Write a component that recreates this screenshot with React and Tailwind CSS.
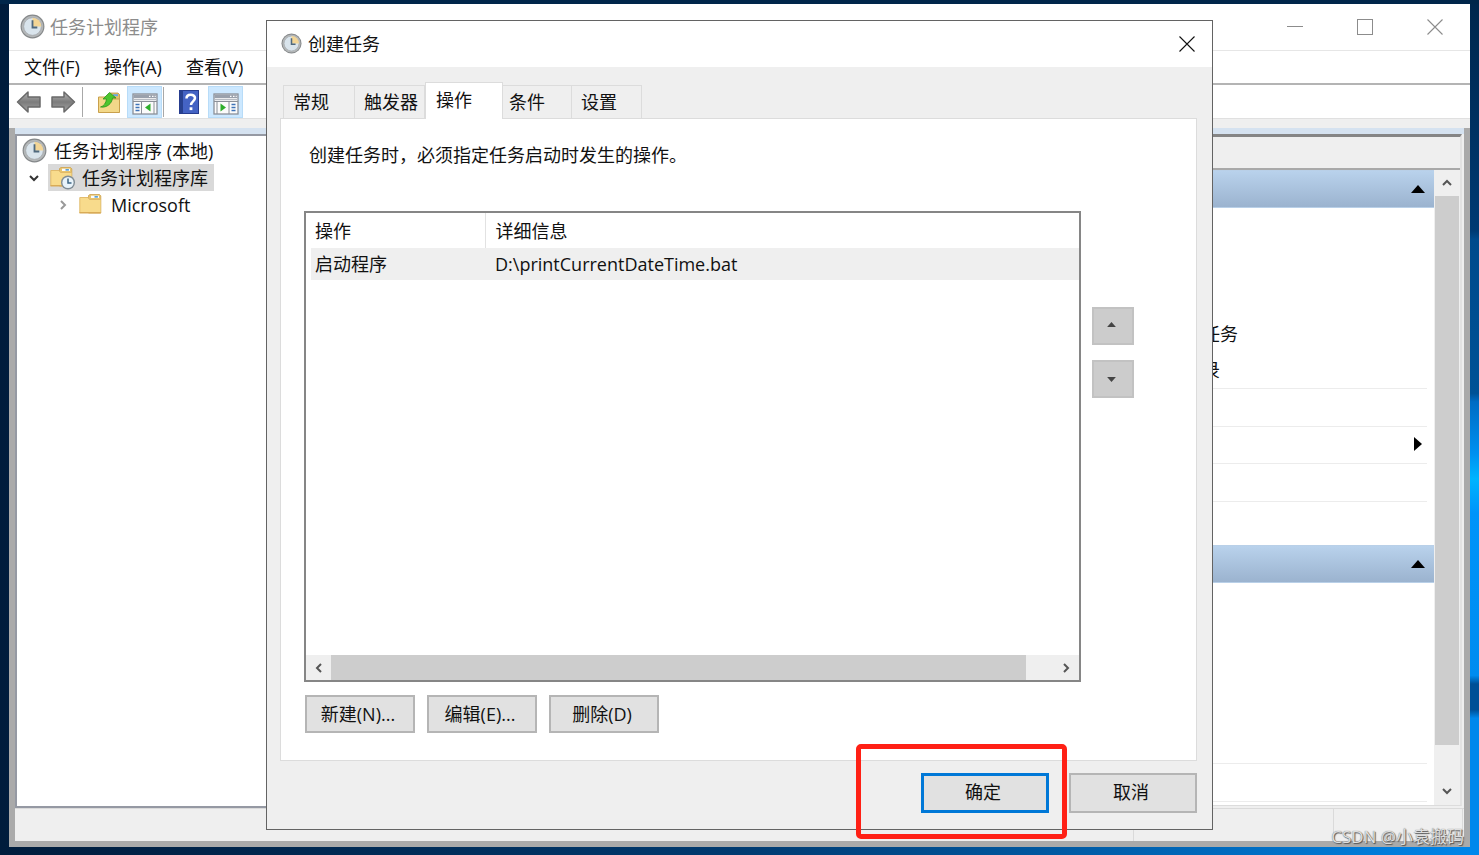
import React from "react";

function ClockIcon({ className }) {
  return (
    <svg viewBox="0 0 26 26" className={className} aria-hidden="true">
      <circle cx="13" cy="13" r="12.4" fill="#85888a" />
      <circle cx="13" cy="13" r="11.2" fill="#b4b7b8" />
      <circle cx="13" cy="13" r="9.2" fill="#d9e4ec" stroke="#a3a8ab" strokeWidth="0.8" />
      <path d="M13 13V3.800A9.200 9.200 0 0 1 22.200 13Z" fill="#f3d595" />
      <path d="M13 6.500V14H18" fill="none" stroke="#4f687d" strokeWidth="1.900" />
    </svg>
  );
}

function FolderIcon({ clock = false, className }) {
  return (
    <svg viewBox="0 0 26 24" className={className} aria-hidden="true">
      <path d="M9.500 6V2.500L11 1.500H20.500L21.800 2.800V20H9.500Z" fill="#e8c46d" stroke="#cda14c" strokeWidth="0.8" />
      <rect x="12" y="2.700" width="8" height="2.300" fill="#fdfdfd" />
      <rect x="15.500" y="3" width="3.400" height="1.700" fill="#5aa0d8" />
      <path d="M0.8 4.500H9L10.500 6.500H21.500V20H0.8Z" fill="#f8db8c" />
      <path d="M0.8 20V4.500H9L10.500 6.500H21.500" fill="none" stroke="#dfb765" strokeWidth="0.9" />
      <path d="M0.5 19H21.800V20.500H0.5Z" fill="#d9ab57" />
      {clock && (
        <g>
          <circle cx="18" cy="16.500" r="7" fill="#7f8c95" />
          <circle cx="18" cy="16.500" r="5.600" fill="#e8f3fa" />
          <path d="M18 12.500V17h3.500" fill="none" stroke="#3c6584" strokeWidth="1.500" />
        </g>
      )}
    </svg>
  );
}

function ArrowIcon({ flip = false }) {
  return (
    <svg viewBox="0 0 26 24" className={flip ? "h-6 w-[26px] -scale-x-100" : "h-6 w-[26px]"} aria-hidden="true">
      <defs>
        <linearGradient id={flip ? "arrowB" : "arrowA"} x1="0" y1="0" x2="0" y2="1">
          <stop offset="0" stopColor="#b5b5b5" />
          <stop offset="0.5" stopColor="#7c7c7c" />
          <stop offset="1" stopColor="#a5a5a5" />
        </linearGradient>
      </defs>
      <path
        d="M1.500 12 12 2v5h12v10H12v5Z"
        fill={flip ? "url(#arrowB)" : "url(#arrowA)"}
        stroke="#6a6a6a"
        strokeWidth="1.500"
        strokeLinejoin="round"
      />
    </svg>
  );
}

function ExportIcon() {
  return (
    <svg viewBox="0 0 24 24" className="size-6" aria-hidden="true">
      <path d="M12 6V4L13.500 3H21L22.500 4.500V22H12Z" fill="#e5bf68" stroke="#bd9343" strokeWidth="0.8" />
      <rect x="16" y="4.200" width="5" height="2" fill="#6aa9de" />
      <path d="M1.500 7H11l2 2h9.500v13.500h-21Z" fill="#f3d889" stroke="#c9a04c" strokeWidth="1" />
      <path d="M3.500 17C7 16 9 13 9.500 9H6L12.500 2.500 19 8h-3.500C15 13.500 10 18 3.500 17Z" fill="#4cc52e" stroke="#2c941c" strokeWidth="0.8" />
    </svg>
  );
}

function PaneIcon({ side }) {
  return (
    <svg viewBox="0 0 26 22" className="h-[22px] w-[26px]" aria-hidden="true">
      <rect x="1" y="1" width="24" height="20" fill="#fbfbfb" stroke="#8b9098" strokeWidth="1.300" />
      <rect x="1.500" y="1.500" width="23" height="3.500" fill="#9aa1ac" />
      <path d="M17 3.300h1.500M20 3.300h1.500M22.700 3.300h1" stroke="#fff" strokeWidth="1.200" />
      <path d="M1 6.500H25" stroke="#b6bbc2" strokeWidth="1.500" />
      <path d="M1 8.500H25" stroke="#8b9098" strokeWidth="1" />
      {side === "left" ? (
        <g>
          <path d="M9.500 8.500V21M22 8.500V21" stroke="#8b9098" />
          <path d="M3.500 11.500h4M3.500 14.500h4M3.500 17.500h4" stroke="#3e73b8" strokeWidth="1.400" />
          <path d="M18.500 10.500v8L13 14.500Z" fill="#2fae2b" />
        </g>
      ) : (
        <g>
          <path d="M16 8.500V21M4 8.500V21" stroke="#8b9098" />
          <path d="M18.500 11.500h4M18.500 14.500h4M18.500 17.500h4" stroke="#3e73b8" strokeWidth="1.400" />
          <path d="M7.500 10.500v8L13 14.500Z" fill="#2fae2b" />
        </g>
      )}
    </svg>
  );
}

function HelpIcon() {
  return (
    <svg viewBox="0 0 20 24" className="h-6 w-5" aria-hidden="true">
      <rect x="0.5" y="0.5" width="19" height="23" fill="#4463c4" stroke="#263c8f" />
      <rect x="1" y="1" width="3" height="22" fill="#27408f" />
      <path d="M7.500 8.500c0-5 8.500-4.800 8.500-.4 0 3.200-4 3.400-4 6.900" fill="none" stroke="#fff" strokeWidth="2.500" />
      <rect x="10.600" y="17.300" width="2.800" height="2.800" fill="#fff" />
    </svg>
  );
}

const chevrons = {
  up: "M2 8 6 4 10 8",
  down: "M2 4 6 8 10 4",
  left: "M8 2 4 6 8 10",
  right: "M4 2 8 6 4 10",
};

function Chevron({ dir, className = "size-3 text-[#555]" }) {
  return (
    <svg viewBox="0 0 12 12" className={className} aria-hidden="true">
      <path d={chevrons[dir]} fill="none" stroke="currentColor" strokeWidth="2" />
    </svg>
  );
}

function Triangle({ points, className }) {
  return (
    <svg viewBox="0 0 14 8" className={className} aria-hidden="true">
      <polygon points={points} fill="currentColor" />
    </svg>
  );
}

function CloseIcon() {
  return (
    <svg viewBox="0 0 16 16" className="size-4" aria-hidden="true">
      <path d="M0.5 0.5 15.500 15.500M15.500 0.5 0.5 15.500" stroke="currentColor" strokeWidth="1.100" />
    </svg>
  );
}

function SectionHeader({ label }) {
  return (
    <button
      type="button"
      aria-label={label}
      className="flex h-[38px] w-full items-center justify-end border-y border-[#b9d0e8] bg-linear-to-b from-[#b9d2ec] to-[#9bb3cf] pr-[9px]"
    >
      <Triangle points="0,8 7,0 14,8" className="h-2 w-[14px] text-black" />
    </button>
  );
}

function PushButton({ children, className = "" }) {
  return (
    <button type="button" className={`border-2 border-[#b5b5b5] bg-[#e1e1e1] pr-1 text-center ${className}`}>
      {children}
    </button>
  );
}

function Tree() {
  return (
    <ul className="w-[360px] shrink-0 border-2 border-[#9599a3] bg-white pt-px">
      <li className="flex h-[27px] items-center gap-[7px] pl-[5px]">
        <ClockIcon className="size-[25px]" />
        任务计划程序 (本地)
      </li>
      <li className="flex h-[27px] items-center pl-[11px]">
        <button type="button" aria-label="折叠" className="flex w-5 items-center">
          <Chevron dir="down" className="size-3 text-[#333]" />
        </button>
        <span className="flex h-[27px] items-center gap-[6px] bg-[#d9d9d9] pr-[6px] pl-[2px]">
          <FolderIcon clock className="h-6 w-[26px]" />
          任务计划程序库
        </span>
      </li>
      <li className="flex h-[27px] items-center gap-[10px] pl-10">
        <button type="button" aria-label="展开" className="flex items-center">
          <Chevron dir="right" className="size-3 text-[#999]" />
        </button>
        <span className="flex items-center gap-[6px]">
          <FolderIcon className="h-6 w-[26px]" />
          Microsoft
        </span>
      </li>
    </ul>
  );
}

function ActionsPane() {
  return (
    <section className="mb-[2px] flex w-[462px] shrink-0 flex-col border-t-[3px] border-r-2 border-b border-t-[#858585] border-r-[#e3e3e3] border-b-[#dcdcdc] bg-white">
      <div className="h-[33px] shrink-0 border-b-2 border-[#a9a9a9] bg-[#efefef]" />
      <div className="flex min-h-0 flex-1">
        <div className="flex min-w-0 flex-1 flex-col">
          <SectionHeader label="任务计划程序库" />
          <ul className="mr-[7px] h-[337px] pl-10">
            <li className="flex h-[108px]" />
            <li className="flex h-9 items-center">显示所有正在运行的任务</li>
            <li className="flex h-9 items-center">启用所有任务历史记录</li>
            <li className="h-[38px] border-t border-[#ececec]" />
            <li className="flex h-[37px] items-center justify-end border-t border-[#ececec] pr-[5px] pb-[2px]">
              <svg viewBox="0 0 8 14" className="h-[14px] w-2" aria-hidden="true">
                <polygon points="0,0 8,7 0,14" />
              </svg>
            </li>
            <li className="h-[38px] border-t border-[#ececec]" />
            <li className="border-t border-[#ececec]" />
          </ul>
          <SectionHeader label="所选项" />
          <div className="mr-[7px] flex flex-1 flex-col justify-end pb-[3px]">
            <div className="h-[39px] border-y border-[#ececec]" />
          </div>
        </div>
        <div className="flex w-[26px] shrink-0 flex-col bg-[#efefef]">
          <button type="button" aria-label="向上滚动" className="flex h-[26px] items-center justify-center">
            <Chevron dir="up" />
          </button>
          <div className="mx-px flex-1 bg-[#cdcdcd]" />
          <button type="button" aria-label="向下滚动" className="flex h-[60px] items-end justify-center pb-2">
            <Chevron dir="down" />
          </button>
        </div>
      </div>
    </section>
  );
}

function Dialog() {
  const tabs = [
    ["常规", "w-[72px] pl-[9px]"],
    ["触发器", "w-[70px] pl-[9px]"],
    ["操作", "w-[78px] pl-[10px]"],
    ["条件", "w-[69px] pl-[6px]"],
    ["设置", "w-[70px] pl-[9px]"],
  ];
  return (
    <div
      role="dialog"
      aria-label="创建任务"
      className="absolute top-5 right-[266px] bottom-[25px] left-[266px] flex flex-col border border-[#636363] bg-[#efefef]"
    >
      <div className="flex h-[46px] shrink-0 items-center bg-white pr-[17px] pb-px pl-[14px]">
        <ClockIcon className="size-[21px]" />
        <h2 className="ml-[6px] flex-1">创建任务</h2>
        <button type="button" aria-label="关闭">
          <CloseIcon />
        </button>
      </div>

      <div role="tablist" className="mt-[15px] flex h-9 shrink-0 items-end pl-4">
        {tabs.map(([name, width]) =>
          name === "操作" ? (
            <button
              key={name}
              type="button"
              role="tab"
              aria-selected="true"
              className={`relative z-10 -mb-px flex h-[37px] items-center border-x border-t border-[#dcdcdc] bg-white pb-[3px] ${width}`}
            >
              {name}
            </button>
          ) : (
            <button
              key={name}
              type="button"
              role="tab"
              aria-selected="false"
              className={`flex h-[33px] items-center border-t border-r border-[#dcdcdc] first:border-l ${width}`}
            >
              {name}
            </button>
          )
        )}
      </div>

      <div className="mr-[15px] ml-[13px] flex min-h-0 flex-1 flex-col border border-[#dcdcdc] bg-white pr-[62px] pb-[27px] pl-[23px]">
        <p className="mt-[23px] ml-[5px] h-[27px] leading-[27px]">创建任务时，必须指定任务启动时发生的操作。</p>
        <div className="mt-[42px] flex min-h-0 flex-1 gap-[11px]">
          <div className="flex flex-1 flex-col border-2 border-[#868686]">
            <div className="flex-1 pl-[5px]">
              <table className="w-full table-fixed border-collapse text-left">
                <thead>
                  <tr className="h-[35px]">
                    <th className="w-[174px] pl-1 font-normal">操作</th>
                    <th className="border-l border-[#e2e2e2] pl-[10px] font-normal">详细信息</th>
                  </tr>
                </thead>
                <tbody>
                  <tr className="h-8 bg-[#efefef]">
                    <td className="pl-1">启动程序</td>
                    <td className="pl-[10px]">D:\printCurrentDateTime.bat</td>
                  </tr>
                </tbody>
              </table>
            </div>
            <div className="flex h-[25px] bg-[#efefef]">
              <button type="button" aria-label="向左滚动" className="flex w-[25px] items-center justify-center">
                <Chevron dir="left" />
              </button>
              <div className="flex-1 bg-[#cdcdcd]" />
              <button type="button" aria-label="向右滚动" className="flex w-[53px] items-center justify-end pr-[7px]">
                <Chevron dir="right" />
              </button>
            </div>
          </div>
          <div className="mt-24 flex w-[42px] flex-col gap-[15px]">
            <button type="button" aria-label="上移" className="flex h-[38px] items-center justify-center border-2 border-[#c2c2c2] bg-[#cccccc] pr-1 pb-1">
              <Triangle points="0,8 7,0 14,8" className="h-[5px] w-[9px] text-[#444]" />
            </button>
            <button type="button" aria-label="下移" className="flex h-[38px] items-center justify-center border-2 border-[#c2c2c2] bg-[#cccccc] pt-px pr-1">
              <Triangle points="0,0 7,8 14,0" className="h-[5px] w-[9px] text-[#444]" />
            </button>
          </div>
        </div>
        <div className="mt-[13px] ml-px flex gap-3">
          <PushButton className="h-[38px] w-[110px]">新建(N)...</PushButton>
          <PushButton className="h-[38px] w-[110px]">编辑(E)...</PushButton>
          <PushButton className="h-[38px] w-[110px]">删除(D)</PushButton>
        </div>
      </div>

      <div className="mt-3 mr-[15px] mb-4 flex shrink-0 justify-end gap-5">
        <div className="relative">
          <button type="button" className="h-10 w-32 border-[3px] border-[#0078d7] bg-[#e1e1e1] pr-1 pb-[2px]">
            确定
          </button>
          <div className="pointer-events-none absolute -top-[29px] -right-[18px] -bottom-[26px] -left-[65px] rounded-[5px] border-[5px] border-[#ff2015]" />
        </div>
        <PushButton className="h-10 w-32 pb-[2px]">取消</PushButton>
      </div>
    </div>
  );
}

export default function App() {
  return (
    <div className="relative flex min-h-screen flex-col overflow-hidden bg-linear-to-r from-[#001c3c] via-[#003a70] to-[#0086ea] px-[9px] pt-1 pb-2 font-['Open_Sans','Noto_Sans_CJK_SC',sans-serif] text-[18px] leading-[26px] text-[#111]">
      <div className="absolute inset-y-0 right-0 w-[9px] bg-[linear-gradient(180deg,#00264c_0%,#003a73_27%,#004a8c_28%,#005296_46%,#006cc4_47%,#0090f0_53%,#00b4ff_56%,#0094fa_60%,#008cf0_79%,#004f96_80%,#004f96_83%,#0088ec_84%,#0088ec_100%)]" />
      <div className="absolute inset-x-0 top-0 h-1 bg-[#00264a]" />

      <main className="relative flex flex-1 flex-col bg-white">
        <header className="flex h-[47px] shrink-0 items-center border-b border-[#e6e6e6] pb-px pl-[11px] text-[#8c8c8c]">
          <ClockIcon className="size-[25px]" />
          <h1 className="ml-[5px] flex-1">任务计划程序</h1>
          <div className="flex items-center gap-[54px] pr-[27px]">
            <button type="button" aria-label="最小化" className="flex h-4 w-4 items-center">
              <span className="h-px w-full bg-[#8c8c8c]" />
            </button>
            <button type="button" aria-label="最大化" className="size-4 border border-[#8c8c8c]" />
            <button type="button" aria-label="关闭">
              <CloseIcon />
            </button>
          </div>
        </header>

        <nav className="flex h-[34px] shrink-0 items-center gap-6 border-b-2 border-[#b4b4b4] pl-[15px]">
          <button type="button">文件(F)</button>
          <button type="button">操作(A)</button>
          <button type="button">查看(V)</button>
        </nav>

        <div className="flex h-[34px] shrink-0 items-center border-b border-[#e0e0e0] pt-px pl-[7px]">
          <button type="button" aria-label="后退">
            <ArrowIcon />
          </button>
          <button type="button" aria-label="前进" className="ml-2">
            <ArrowIcon flip />
          </button>
          <span className="ml-[6px] h-[30px] w-px bg-[#a8a8a8]" />
          <button type="button" aria-label="上移一级" className="ml-[14px]">
            <ExportIcon />
          </button>
          <button type="button" aria-label="显示控制台树" className="ml-[6px] flex h-8 w-[35px] items-center justify-center border border-[#b8dcf8] bg-[#cce8ff] pt-1">
            <PaneIcon side="left" />
          </button>
          <span className="ml-px h-[30px] w-px bg-[#a8a8a8]" />
          <button type="button" aria-label="帮助" className="ml-[15px]">
            <HelpIcon />
          </button>
          <button type="button" aria-label="显示操作窗格" className="ml-[9px] flex h-8 w-[35px] items-center justify-center border border-[#b8dcf8] bg-[#cce8ff] pt-1">
            <PaneIcon side="right" />
          </button>
        </div>
        <div className="h-[9px] shrink-0 bg-[#efefef]" />

        <div className="flex min-h-0 flex-1 flex-col border-x-[6px] border-b-[6px] border-[#aaaaaa] bg-[#efefef]">
          <div className="h-[6px] shrink-0 bg-[#d5e2f0]" />
          <div className="flex min-h-0 flex-1 pr-[2px]">
            <Tree />
            <div className="flex-1 bg-white" />
            <ActionsPane />
          </div>
          <footer className="flex h-[33px] shrink-0 justify-end border-t border-[#dadada] pr-px">
            <span className="w-[200px] border-l border-[#dadada]" />
            <span className="w-[130px] border-x border-[#dadada]" />
          </footer>
        </div>
      </main>

      <Dialog />

      <p className="absolute right-[15px] bottom-[5px] text-[17px] text-[#dedede] [text-shadow:1px_1px_1px_#555,0_0_1px_#666]">
        CSDN @小袁搬码
      </p>
    </div>
  );
}
